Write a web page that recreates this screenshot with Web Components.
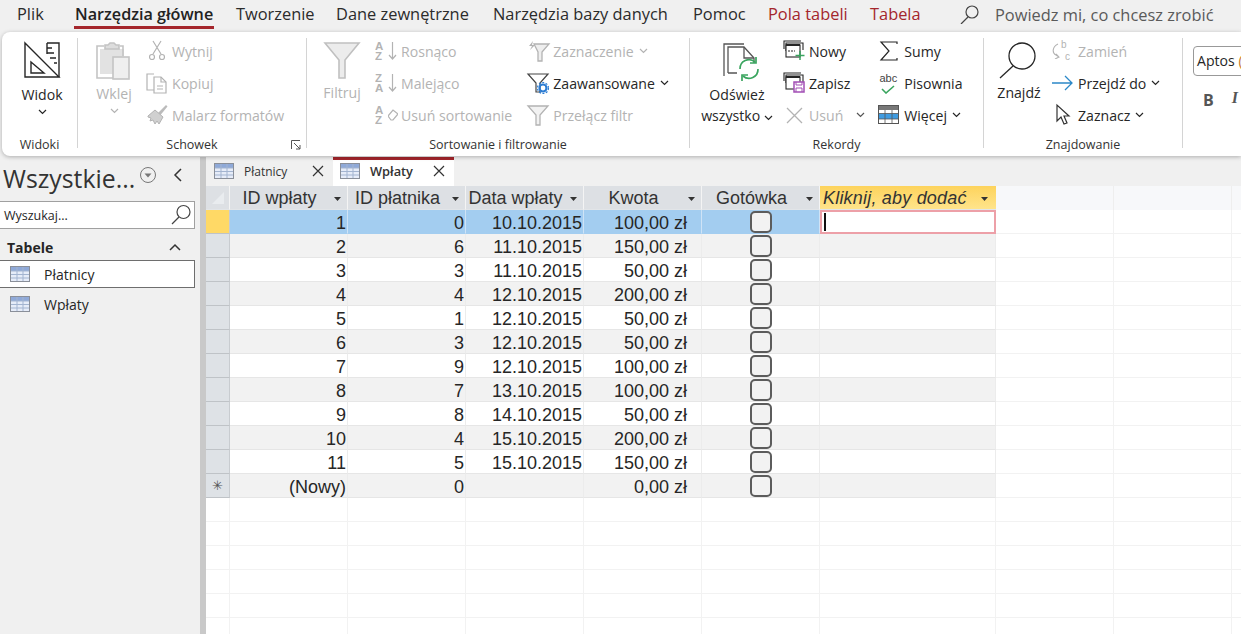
<!DOCTYPE html>
<html lang="pl">
<head>
<meta charset="utf-8">
<title>Access</title>
<style>
  html, body { margin: 0; height: 100%; overflow: hidden; background: #f0f0f0; }
  body { font-family: "Open Sans", "Liberation Sans", sans-serif; color: #262626; }
  .app { display: flex; flex-direction: column; height: 634px; width: 1241px; overflow: hidden; }
  .work { display: flex; flex: 1; min-height: 0; }
</style>
</head>
<body>
<div class="app">
  <top-tabs></top-tabs>
  <a-ribbon>
    <r-group label="Widoki" width="75" pad="2">
      <r-large icon="view" label="Widok" chev="below" width="76" gap="4"></r-large>
    </r-group>
    <r-group label="Schowek" width="228" pad="17" launcher>
      <r-large icon="paste" label="Wklej" chev="below" width="38" gap="3" disabled></r-large>
      <r-col left="13">
        <r-small icon="cut" disabled>Wytnij</r-small>
        <r-small icon="copy" disabled>Kopiuj</r-small>
        <r-small icon="brush" disabled>Malarz formatów</r-small>
      </r-col>
    </r-group>
    <r-group label="Sortowanie i filtrowanie" width="382" pad="17">
      <r-large icon="filter" label="Filtruj" width="36" gap="2" disabled></r-large>
      <r-col left="15">
        <r-small icon="asc" disabled>Rosnąco</r-small>
        <r-small icon="desc" disabled>Malejąco</r-small>
        <r-small icon="clearsort" disabled>Usuń sortowanie</r-small>
      </r-col>
      <r-col left="15">
        <r-small icon="selection" chev disabled>Zaznaczenie</r-small>
        <r-small icon="advanced" chev>Zaawansowane</r-small>
        <r-small icon="toggle" disabled>Przełącz filtr</r-small>
      </r-col>
    </r-group>
    <r-group label="Rekordy" width="293" pad="10">
      <r-large icon="refresh" label="Odśwież" label2="wszystko" chev="inline" width="74" gap="4"></r-large>
      <r-col left="9">
        <r-small icon="newrec">Nowy</r-small>
        <r-small icon="save">Zapisz</r-small>
        <r-small icon="del" chevgap disabled>Usuń</r-small>
      </r-col>
      <r-col left="13">
        <r-small icon="sum">Sumy</r-small>
        <r-small icon="spell">Pisownia</r-small>
        <r-small icon="more" chev>Więcej</r-small>
      </r-col>
    </r-group>
    <r-group label="Znajdowanie" width="198" pad="10">
      <r-large icon="find" label="Znajdź" width="50" gap="2"></r-large>
      <r-col left="8">
        <r-small icon="replace" disabled>Zamień</r-small>
        <r-small icon="goto" chev>Przejdź do</r-small>
        <r-small icon="select" chev>Zaznacz</r-small>
      </r-col>
    </r-group>
    <font-tools></font-tools>
  </a-ribbon>
  <div class="work">
    <nav-pane></nav-pane>
    <doc-area></doc-area>
  </div>
</div>

<script>
const S = 'fill="none" stroke="currentColor"';
const TABLE = `<g stroke-width="1"><rect x=".5" y=".5" width="19" height="15" fill="#fff" stroke="#8a8f99"/><rect x="1" y="1" width="18" height="4" fill="#8fa9d8"/><rect x="1" y="5" width="18" height="10" fill="#e6ecf8"/><path d="M7 1v14M13 1v14M1 5h18M1 8.500h18M1 12h18" stroke="#a3b4d0" fill="none"/></g>`;
// letters stacked in two lines, next to a small drawn mark
const stack = (a, b, mark) => `<span style="display:flex;align-items:center;gap:3px"><span style="display:flex;flex-direction:column;width:10px;font:700 11.500px/10px 'Liberation Sans',sans-serif"><span style="display:block;height:10px;overflow:hidden">${a}</span><span style="display:block;height:10px;overflow:hidden">${b}</span></span>${mark}</span>`;
const DOWN = `<svg width="9" height="20" viewBox="0 0 9 20"><path d="M4.500 1v17M1 14l3.500 4L8 14" ${S} stroke-width="1.200"/></svg>`;
const ERASE = `<svg width="10" height="12" viewBox="0 0 10 12"><path d="M0 7 5 1l5 4-5 6H3Z" ${S} stroke-width="1.200"/></svg>`;
const ICONS = {
  view: [36, `<g ${S} stroke="#444" stroke-width="1.400"><path d="M1 1 35 35H1Z"/><path d="M7 20 20 31H7Z"/><path d="M23 1h12v34"/><path d="M23 1v11M23 6h5M23 11h7M26 16h6M30 21h3"/></g>`],
  paste: [36, `<g fill="none" stroke="#c4c4c4" stroke-width="1.600"><rect x="4" y="7" width="24" height="25" fill="#e2e2e2" stroke="none"/><path d="M8 4H1v32h16"/><path d="M24 4h3v10"/><path d="M9 7V3h3l2-2h4l2 2h3v4Z" fill="#ddd"/><rect x="17" y="15" width="16" height="22" fill="#efefef"/></g>`],
  cut: [22, `<g ${S} stroke-width="1.200"><path d="M7 1 15 14M15 1 7 14"/><circle cx="6" cy="17" r="2.500"/><circle cx="16" cy="17" r="2.500"/></g>`],
  copy: [22, `<g ${S} stroke-width="1.200"><path d="M8 2H1v16h7"/><path d="M8 5h7l5 5v11H8Z"/><path d="M15 5v5h5M11 14h6M11 17h6"/></g>`],
  brush: [22, `<path d="M12 9 20 1l1.500 1.500-7 8.500Z" fill="#bbb"/><path d="M2 12 9 6l8 7-4 7-2-3-2 3-2-4-3 1 1-3-3-1Z" fill="#d0d0d0" stroke="#b3b3b3"/>`],
  filter: [36, `<path d="M1 1H35L21 18V36H15V18Z" fill="#ececec" stroke="#c0c0c0" stroke-width="1.600"/>`],
  asc: [22, stack('A', 'Z', DOWN), true],
  desc: [22, stack('Z', 'A', DOWN), true],
  clearsort: [22, stack('A', 'Z', ERASE), true],
  selection: [22, `<path d="M7 4H22L15 12V21H11V12Z" fill="#eee" stroke="currentColor" stroke-width="1.300"/><path d="M6 1 2 6h3L3 10l5-5H5Z" fill="currentColor"/>`],
  advanced: [22, `<path d="M1 2H21L13 11V20H9V11Z" fill="#fff" stroke="#444" stroke-width="1.200"/><g transform="translate(10 10)"><circle cx="6" cy="6" r="3.500" fill="none" stroke="#2b7cd3" stroke-width="2.200"/><circle cx="6" cy="6" r="5.500" fill="none" stroke="#2b7cd3" stroke-width="1.200" stroke-dasharray="2 1.500"/></g>`],
  toggle: [22, `<path d="M1 2H21L13 11V21H9V11Z" fill="#f2f2f2" stroke="currentColor" stroke-width="1.300"/>`],
  refresh: [40, `<g transform="translate(3 1)"><g fill="none" stroke="#555" stroke-width="1.300"><path d="M4 33V1h20"/><path d="M8 30V4h16l10 11v5"/><path d="M24 4v11h10"/><path d="M8 30h9"/></g><g fill="none" stroke="#3aa55f" stroke-width="1.700"><path d="M20 26a9 9 0 0 1 15-7"/><path d="M38 26a9 9 0 0 1-15 7"/><path d="M36 14v6h-6M22 38v-6h6"/></g></g>`],
  newrec: [22, `<g ${S} stroke="#444" stroke-width="1.100"><path d="M1 9V1h17M3 11V3h17v7"/><rect x="3" y="5" width="14" height="12" fill="#fff"/><path d="M3 5h14" stroke-width="2"/><path d="M5 11h7" stroke-dasharray="2 1"/></g><path d="M17 11v9M12.500 15.500h9" stroke="#3aa55f" stroke-width="1.500"/>`],
  save: [22, `<g ${S} stroke="#444" stroke-width="1.100"><path d="M1 9V1h17M3 11V3h17v7"/><rect x="3" y="5" width="14" height="12" fill="#fff"/><path d="M3 5h14" stroke-width="2"/></g><path d="M11 10h10v10H11Z" fill="#fff" stroke="#a24fb5" stroke-width="1.500"/><path d="M13 10v3h6v-3M13 20v-4h6v4" fill="none" stroke="#a24fb5"/>`],
  del: [22, `<path d="M4 4 19 19M19 4 4 19" ${S} stroke-width="1.300"/>`],
  sum: [22, `<path d="M19 4V2H3l8 9-8 9h16v-2" ${S} stroke="#555" stroke-width="1.200"/>`],
  spell: [22, `<span style="display:flex;flex-direction:column;align-items:center;width:20px"><span style="display:block;font:11px/13px 'Liberation Sans',sans-serif;color:#444">abc</span><svg width="14" height="9" viewBox="0 0 14 9"><path d="M1 4l4 4 8-7" fill="none" stroke="#3aa55f" stroke-width="1.600"/></svg></span>`, true],
  more: [22, `<rect x=".5" y="1.500" width="20" height="18" fill="#fff" stroke="#555"/><rect x="1" y="2" width="19" height="4" fill="#777"/><rect x="1" y="9.500" width="19" height="5.500" fill="#3f9be0"/><path d="M7 6v13M14 6v13M1 9.500h19M1 15h19" stroke="#555" fill="none" stroke-width=".8"/>`],
  find: [40, `<g ${S} stroke="#444" stroke-width="1.300"><circle cx="23" cy="14" r="13"/><path d="M14 24 1 36"/></g>`],
  replace: [22, `<span style="display:flex;align-items:center;gap:1px"><svg width="8" height="16" viewBox="0 0 8 16"><path d="M6 1C0 4 0 10 4 12l3 2M3 16l4-2-3-3" ${S} stroke-width="1.100"/></svg><span style="display:flex;flex-direction:column;font:10px/12px 'Liberation Sans',sans-serif"><span style="display:block">b</span><span style="display:block;margin-left:4px">c</span></span></span>`, true],
  goto: [22, `<path d="M0 11H20M13 4l7 7-7 7" fill="none" stroke="#2b88c8" stroke-width="1.300"/>`],
  select: [22, `<path d="M5 1V17L9 13 12 20 15 19 12 12H17Z" fill="#fff" stroke="#333" stroke-width="1.200"/>`],
  table: [20, TABLE]
};
const svgIcon = (name) => {
  const [size, body, raw] = ICONS[name];
  if (raw) return body;
  const h = name === 'table' ? 16 : size;
  return `<svg width="${size}" height="${h}" viewBox="0 0 ${size} ${h}" overflow="visible" aria-hidden="true">${body}</svg>`;
};
const CHEV = `<svg width="9" height="6" viewBox="0 0 9 6"><path d="M1 1l3.500 3.500L8 1" fill="none" stroke="currentColor" stroke-width="1.200"/></svg>`;

class TopTabs extends HTMLElement {
  connectedCallback() {
    this.attachShadow({ mode: 'open' });
    const tabs = [['Plik', 17], ['Narzędzia główne', 74, 'on'], ['Tworzenie', 236], ['Dane zewnętrzne', 336], ['Narzędzia bazy danych', 493], ['Pomoc', 693], ['Pola tabeli', 768, 'ctx'], ['Tabela', 870, 'ctx']];
    const html = tabs.map(([t, x, c]) => `<span class="tab ${c || ''}" style="left:${x}px">${t}</span>`).join('');
    this.shadowRoot.innerHTML = `
      <style>
        :host { display: flex; height: 32px; flex: none; background: #f0f0f0; font-size: 16.400px; color: #2b2b2b; white-space: nowrap; position: relative; }
        .tab { position: absolute; top: 3px; height: 23px; line-height: 22px; }
        .on { font-weight: 600; font-size: 16.200px; color: #222; border-bottom: 3px solid #a4262c; padding: 0 1px; }
        .ctx { color: #a4262c; }
        .tell { position: absolute; left: 960px; top: 3px; display: flex; gap: 16px; align-items: center; height: 22px; color: #5a5a5a; }
      </style>
      ${html}
      <div class="tell">
        <svg width="19" height="19" viewBox="0 0 19 19"><circle cx="12" cy="7" r="6" fill="none" stroke="#444" stroke-width="1.200"/><path d="M8 12 1 19" stroke="#444" stroke-width="1.200"/></svg>
        <span>Powiedz mi, co chcesz zrobić</span>
      </div>`;
  }
}
customElements.define('top-tabs', TopTabs);

class ARibbon extends HTMLElement {
  connectedCallback() {
    this.attachShadow({ mode: 'open' });
    this.shadowRoot.innerHTML = `
      <style>
        :host { display: flex; flex: none; height: 124px; margin-left: 2px; margin-bottom: 1px; background: #fff; border-radius: 8px 0 0 8px; box-shadow: 0 1px 4px rgba(0,0,0,.28); overflow: hidden; position: relative; z-index: 2; font-size: 14.100px; color: #262626; }
      </style>
      <slot></slot>`;
  }
}
customElements.define('a-ribbon', ARibbon);

class RGroup extends HTMLElement {
  connectedCallback() {
    const w = this.getAttribute('width');
    const pad = this.getAttribute('pad');
    this.attachShadow({ mode: 'open' });
    this.shadowRoot.innerHTML = `
      <style>
        :host { display: flex; flex: none; flex-direction: column; width: ${w}px; margin-right: 1px; position: relative; }
        :host::after { content: ""; position: absolute; right: -1px; top: 6px; bottom: 8px; width: 1px; background: #d4d4d4; }
        .body { display: flex; height: 100px; padding: 3px 0 0 ${pad}px; box-sizing: border-box; }
        .label { text-align: center; font-size: 12.500px; line-height: 18px; height: 18px; margin-top: 4px; color: #333; }
        .launch { position: absolute; right: 5px; bottom: 6px; }
      </style>
      <div class="body"><slot></slot></div>
      <div class="label">${this.getAttribute('label')}</div>
      ${this.hasAttribute('launcher') ? `<svg class="launch" width="10" height="10" viewBox="0 0 10 10"><path d="M.5 9V.5H9M3 3l6 6M9 5v4H5" fill="none" stroke="#555"/></svg>` : ''}`;
  }
}
customElements.define('r-group', RGroup);

class RLarge extends HTMLElement {
  connectedCallback() {
    const chev = this.getAttribute('chev');
    const label2 = this.getAttribute('label2');
    this.attachShadow({ mode: 'open' });
    this.shadowRoot.innerHTML = `
      <style>
        :host { display: flex; flex: none; flex-direction: column; align-items: center; width: ${this.getAttribute('width')}px; color: ${this.hasAttribute('disabled') ? '#b3b3b3' : '#262626'}; }
        .ic { height: 38px; margin-top: 7px; display: flex; align-items: flex-start; }
        .t { line-height: 21px; margin-top: ${this.getAttribute('gap') || 0}px; white-space: nowrap; }
        .c { display: flex; margin-top: 4px; height: 10px; }
      </style>
      <div class="ic">${svgIcon(this.getAttribute('icon'))}</div>
      <div class="t">${this.getAttribute('label')}</div>
      ${label2 ? `<div class="t" style="margin-top:0">${label2} ${CHEV}</div>` : ''}
      ${chev === 'below' ? `<div class="c">${CHEV}</div>` : ''}`;
  }
}
customElements.define('r-large', RLarge);

class RCol extends HTMLElement {
  connectedCallback() {
    this.attachShadow({ mode: 'open' });
    this.shadowRoot.innerHTML = `
      <style>:host { display: flex; flex: none; flex-direction: column; margin-left: ${this.getAttribute('left') || 0}px; }</style>
      <slot></slot>`;
  }
}
customElements.define('r-col', RCol);

class RSmall extends HTMLElement {
  connectedCallback() {
    this.attachShadow({ mode: 'open' });
    this.shadowRoot.innerHTML = `
      <style>
        :host { display: flex; height: 32px; align-items: center; gap: 4px; white-space: nowrap; color: ${this.hasAttribute('disabled') ? '#b3b3b3' : '#262626'}; }
        .ic { width: 22px; height: 22px; display: flex; align-items: center; flex: none; }
        .c { display: flex; margin-left: 1px; }
        .far { margin-left: 9px; color: #555; }
      </style>
      <span class="ic">${svgIcon(this.getAttribute('icon'))}</span>
      <slot></slot>
      ${this.hasAttribute('chev') ? `<span class="c">${CHEV}</span>` : ''}
      ${this.hasAttribute('chevgap') ? `<span class="c far">${CHEV}</span>` : ''}`;
  }
}
customElements.define('r-small', RSmall);

class FontTools extends HTMLElement {
  connectedCallback() {
    this.attachShadow({ mode: 'open' });
    this.shadowRoot.innerHTML = `
      <style>
        :host { display: flex; flex: none; flex-direction: column; padding: 14px 0 0 10px; width: 70px; overflow: hidden; }
        .combo { width: 120px; height: 30px; box-sizing: border-box; border: 1px solid #999; border-radius: 4px; padding-left: 3px; line-height: 28px; white-space: nowrap; }
        .fmt { display: flex; gap: 18px; margin: 13px 0 0 10px; font-size: 16px; color: #555; }
        b { font-weight: 700; }
        i { font-family: "Liberation Serif", serif; font-weight: 700; }
      </style>
      <div class="combo">Aptos <span style="color:#c77a2a">(</span></div>
      <div class="fmt"><b>B</b><i>I</i></div>`;
  }
}
customElements.define('font-tools', FontTools);

class NavPane extends HTMLElement {
  connectedCallback() {
    this.attachShadow({ mode: 'open' });
    this.shadowRoot.innerHTML = `
      <style>
        :host { display: flex; flex: none; flex-direction: column; width: 200px; color: #262626; font-size: 14px; }
        .head { display: flex; align-items: center; height: 44px; box-sizing: border-box; padding: 0 0 2px 3px; }
        .title { font-size: 24.800px; width: 134px; white-space: nowrap; color: #333; }
        .head svg { flex: none; margin-bottom: 6px; }
        .search { display: flex; align-items: center; justify-content: space-between; height: 28px; width: 195px; box-sizing: border-box; background: #fff; border: 1px solid #a0a0a0; border-left: 0; padding: 0 2px 0 4px; font-size: 12.500px; }
        .sec { display: flex; align-items: center; justify-content: space-between; height: 31px; width: 195px; box-sizing: border-box; padding: 5px 14px 0 7px; font-weight: 700; }
        .item { display: flex; align-items: center; gap: 14px; height: 28px; width: 195px; box-sizing: border-box; padding-left: 10px; margin-bottom: 2px; border: 1px solid transparent; border-left: 0; }
        .item.sel { background: #fff; border-color: #6e6e6e; }
      </style>
      <div class="head">
        <div class="title">Wszystkie...</div>
        <svg width="18" height="18" viewBox="0 0 18 18" style="margin-left:2px"><circle cx="9" cy="9" r="7.500" fill="none" stroke="#777"/><path d="M5.500 7.500h7L9 11.500Z" fill="#777"/></svg>
        <svg width="12" height="14" viewBox="0 0 12 14" style="margin-left:15px"><path d="M9 1 3 7l6 6" fill="none" stroke="#333" stroke-width="1.500"/></svg>
      </div>
      <div class="search"><span>Wyszukaj...</span>
        <svg width="22" height="22" viewBox="0 0 22 22"><circle cx="13.500" cy="8" r="6.500" fill="none" stroke="#444" stroke-width="1.200"/><path d="M9 13 2 20" stroke="#444" stroke-width="1.200"/></svg>
      </div>
      <div class="sec"><span>Tabele</span><svg width="12" height="8" viewBox="0 0 12 8"><path d="M1 7l5-5 5 5" fill="none" stroke="#333" stroke-width="1.500"/></svg></div>
      <div class="item sel">${svgIcon('table')}<span>Płatnicy</span></div>
      <div class="item">${svgIcon('table')}<span>Wpłaty</span></div>`;
  }
}
customElements.define('nav-pane', NavPane);

class DocArea extends HTMLElement {
  connectedCallback() {
    this.attachShadow({ mode: 'open' });
    const close = `<svg class="x" width="12" height="12" viewBox="0 0 12 12"><path d="M1 1l10 10M11 1 1 11" stroke="#333" stroke-width="1.200"/></svg>`;
    this.shadowRoot.innerHTML = `
      <style>
        :host { display: flex; flex: 1; min-width: 0; flex-direction: column; border-left: 6px solid #c9c9c9; font-size: 12px; color: #333; }
        .tabs { display: flex; height: 29px; flex: none; }
        .t { display: flex; align-items: center; height: 29px; box-sizing: border-box; padding: 0 9px 1px 8px; white-space: nowrap; }
        .t.a { background: #fff; border-top: 3px solid #a4262c; padding-bottom: 4px; padding-left: 7px; font-size: 12.800px; font-weight: 600; }
        .t span { margin-left: 10px; }
        .x { margin-left: auto; }
      </style>
      <div class="tabs">
        <div class="t" style="width:127px">${svgIcon('table')}<span>Płatnicy</span>${close}</div>
        <div class="t a" style="width:121px">${svgIcon('table')}<span>Wpłaty</span>${close}</div>
      </div>
      <data-sheet></data-sheet>`;
  }
}
customElements.define('doc-area', DocArea);

const ROWS = [
  [1, 0, '10.10.2015', '100,00 zł'], [2, 6, '11.10.2015', '150,00 zł'], [3, 3, '11.10.2015', '50,00 zł'],
  [4, 4, '12.10.2015', '200,00 zł'], [5, 1, '12.10.2015', '50,00 zł'], [6, 3, '12.10.2015', '50,00 zł'],
  [7, 9, '12.10.2015', '100,00 zł'], [8, 7, '13.10.2015', '100,00 zł'], [9, 8, '14.10.2015', '50,00 zł'],
  [10, 4, '15.10.2015', '200,00 zł'], [11, 5, '15.10.2015', '150,00 zł']
];

class DataSheet extends HTMLElement {
  connectedCallback() {
    this.attachShadow({ mode: 'open' });
    const arrow = `<svg class="ar" width="7" height="4" viewBox="0 0 7 4"><path d="M0 0h7L3.500 4Z" fill="#333"/></svg>`;
    const heads = ['ID wpłaty', 'ID płatnika', 'Data wpłaty', 'Kwota', 'Gotówka'];
    const check = `<span class="ck"></span>`;
    let h = `<div class="c hd corner"><svg width="14" height="14" viewBox="0 0 14 14"><path d="M13 1 1 13h12Z" fill="#e9ecef"/></svg></div>`;
    heads.forEach((t) => { h += `<div class="c hd"><span>${t}</span>${arrow}</div>`; });
    h += `<div class="c hd add"><span>Kliknij, aby dodać</span>${arrow}</div><div class="c hd blank"></div><div class="c hd blank"></div><div class="c hd blank"></div>`;
    const filler = `<div class="c e"></div><div class="c e"></div><div class="c e"></div>`;
    ROWS.forEach((r, i) => {
      const first = i === 0;
      const cls = first ? 'sel' : (i % 2 ? 'alt' : '');
      h += `<div class="c sl ${first ? 'cur' : ''}"></div>`;
      r.forEach((v, j) => { h += `<div class="c n ${j === 3 ? 'k' : ''} ${cls}">${v}</div>`; });
      h += `<div class="c m ${cls}">${check}</div>`;
      h += first ? `<div class="c edit"><span class="caret"></span></div>` : `<div class="c ${cls}"></div>`;
      h += filler;
    });
    h += `<div class="c sl star">✳</div><div class="c n alt">(Nowy)</div><div class="c n alt">0</div><div class="c n alt"></div><div class="c n k alt">0,00 zł</div><div class="c m alt">${check}</div><div class="c alt"></div>${filler}`;
    for (let i = 0; i < 6; i++) {
      h += `<div class="c e"></div>`.repeat(10);
    }
    this.shadowRoot.innerHTML = `
      <style>
        :host { display: block; flex: 1; min-height: 0; overflow: hidden; background: #fff; font-family: "Liberation Sans", Arial, sans-serif; font-size: 18px; color: #262626; }
        .grid { display: grid; grid-template-columns: 24px repeat(5, 118px) 176px 118px 118px 118px; grid-auto-rows: 24px; width: 1035px; }
        .c { box-sizing: border-box; border-right: 1px solid #ececec; border-bottom: 1px solid #e6e6e6; padding: 0 1px; display: flex; align-items: center; white-space: nowrap; overflow: hidden; line-height: 22px; }
        .hd { background: #dde0e4; border-right: 1px solid #f4f4f4; border-bottom: 1px solid #e2e5e8; justify-content: center; position: relative; padding-right: 19px; color: #333; }
        .hd .ar { position: absolute; right: 6px; top: 11px; }
        .corner { padding: 0; }
        .add { background: linear-gradient(#fdd35c, #ffe48b); font-style: italic; letter-spacing: .2px; justify-content: flex-start; padding-left: 3px; border-right: 0; }
        .add .ar { right: 8px; }
        .blank { background: #f7f8fa; border-right: 1px solid #eee; border-bottom: 0; }
        .sl { background: #dee2e6; border-right: 1px solid #c8ccd0; border-bottom: 1px solid #bfc3c7; }
        .cur { background: #ffd966; }
        .star { justify-content: center; font-size: 13px; color: #555; }
        .n { justify-content: flex-end; padding-top: 2px; }
        .k { padding-right: 14px; }
        .m { justify-content: center; }
        .alt { background: #f2f2f2; }
        .sel { background: #a3cdf0; border-right-color: #cfe3f6; border-bottom-color: #a3cdf0; }
        .e { border-right-color: #f2f2f2; border-bottom-color: #f2f2f2; }
        .ck { width: 22px; height: 22px; box-sizing: border-box; border: 2px solid #5c5c5c; border-radius: 5px; background: #f2f2f2; flex: none; }
        .edit { border: 2px solid #eda0a8; padding: 0 0 0 2px; }
        .caret { width: 2px; height: 18px; background: #111; }
      </style>
      <div class="grid">${h}</div>`;
  }
}
customElements.define('data-sheet', DataSheet);
</script>
</body>
</html>
